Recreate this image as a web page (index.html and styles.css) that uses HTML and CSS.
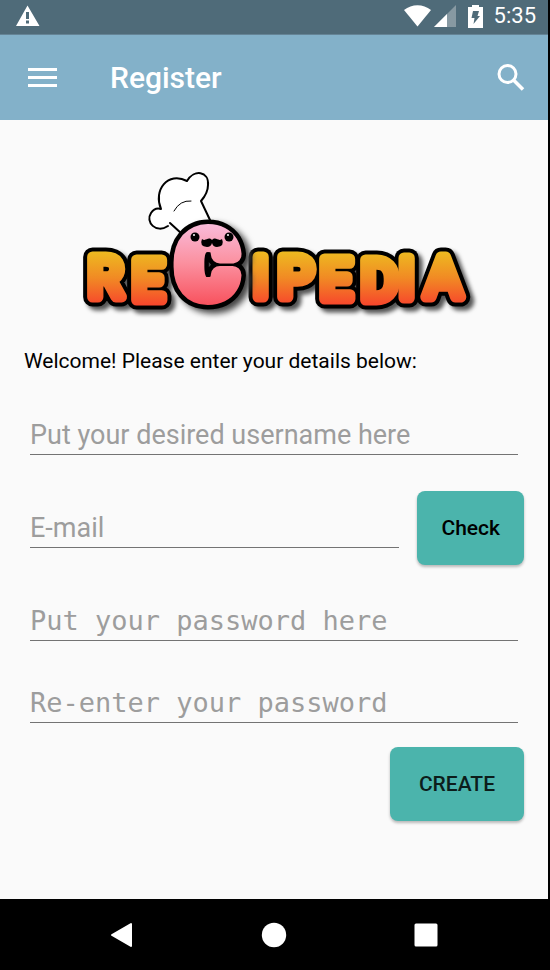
FILE: index.html
```html
<!DOCTYPE html>
<html lang="en">
<head>
<meta charset="utf-8">
<meta name="viewport" content="width=device-width, initial-scale=1">
<title>Register</title>
<link rel="stylesheet" href="styles.css">
</head>
<body>
<div class="status">
  <svg class="status-alert" width="24" height="22" viewBox="0 0 24 22" aria-hidden="true"><path fill="#fff" fill-rule="evenodd" d="M11.500 .5L23.500 21H0zM10 7v7h3V7zM10 15.500v3h3v-3z"/></svg>
  <svg width="27" height="22" viewBox="0 0 27 22" aria-hidden="true"><path fill="#fff" d="M0 5C8-1.500 19-1.500 27 5L13.500 21.500z"/></svg>
  <svg class="status-signal" width="22" height="22" viewBox="0 0 22 22" aria-hidden="true"><path fill="#8799a2" d="M22 0v22H0z"/><path fill="#fff" d="M13 9v13H0z"/></svg>
  <svg class="status-battery" width="15" height="23" viewBox="0 0 15 23" aria-hidden="true"><path fill="#fff" d="M4 0h7v2h4v21H0V2h4z"/><path fill="#4f6b79" d="M5 6h6l-1.500 5H12L5.500 19l1-6H3.500z"/></svg>
  <span class="clock">5:35</span>
</div>
<header class="appbar">
  <button class="icon-button" type="button" aria-label="Menu"><svg width="29" height="20" viewBox="0 0 29 20"><path fill="#fff" d="M0 0h29v3H0zM0 8h29v3H0zM0 16h29v3H0z"/></svg></button>
  <h1>Register</h1>
  <button class="icon-button" type="button" aria-label="Search"><svg width="27" height="28" viewBox="0 0 27 28"><circle cx="10.500" cy="10" r="8.500" fill="none" stroke="#fff" stroke-width="3"/><path d="M16.500 16l9.500 9.500" fill="none" stroke="#fff" stroke-width="3.500"/></svg></button>
</header>
<main>
  <svg class="logo" viewBox="74 165 400 160" role="img" aria-label="Recipedia">
    <defs>
      <linearGradient id="orange" gradientUnits="userSpaceOnUse" x1="0" y1="250" x2="0" y2="306"><stop offset="0" stop-color="#edbd20"/><stop offset=".5" stop-color="#f18a24"/><stop offset="1" stop-color="#f7442c"/></linearGradient>
      <linearGradient id="pink" gradientUnits="userSpaceOnUse" x1="0" y1="220" x2="0" y2="306"><stop offset="0" stop-color="#f9bfe0"/><stop offset=".5" stop-color="#fb909f"/><stop offset="1" stop-color="#f8505c"/></linearGradient>
      <text id="word" class="word" x="88 132 253 278 320 361 399 425" y="297 300 297 297 299 300 298 297">REIPEDIA</text>
      <text id="big" class="big" x="179" y="295">C</text>
    </defs>
    <use href="#word" class="word-outline"/>
    <use href="#word" class="word-fill"/>
    <g fill="#fff" stroke="#000" stroke-linejoin="round" stroke-linecap="round">
      <path stroke="none" d="M182 234L170 222C159 234 145 223 150 213Q153 207 161 209C153 193 167 174 187 181C194 170 209 171 208 185Q208 193 201 201L210 220z"/>
      <path fill="none" stroke-width="2" d="M182 234L170 223M168 226C156 234 145 222 151 213Q155 207 161 209M161 209C153 190 168 171 187 181C194 169 209 171 208 185Q208 193 201 201L210 220"/>
      <path fill="none" stroke-width="1" d="M174 211Q180 200 191 201"/>
    </g>
    <use href="#big" class="big-outline"/>
    <use href="#big" class="big-fill"/>
    <circle cx="195" cy="237" r="4.500"/><circle cx="229" cy="237" r="4.500"/>
    <g fill="#fff"><circle cx="194" cy="235" r="1"/><circle cx="228" cy="235" r="1"/></g>
    <path d="M212 240C208 236 206 242 202 239Q199 246 207 247Q211 247 212 243Q213 247 217 247Q225 246 222 239C218 242 216 236 212 240z"/>
  </svg>
  <p class="welcome">Welcome! Please enter your details below:</p>
  <form>
    <div class="fields">
      <input class="field" type="text" placeholder="Put your desired username here" aria-label="Username">
      <div class="email-row">
        <input class="field" type="email" placeholder="E-mail" aria-label="E-mail">
        <button class="button check" type="button">Check</button>
      </div>
      <input class="field mono" type="password" placeholder="Put your password here" aria-label="Password">
      <input class="field mono" type="password" placeholder="Re-enter your password" aria-label="Repeat password">
    </div>
    <button class="button create" type="submit">CREATE</button>
  </form>
</main>
<nav aria-label="System">
  <button type="button" aria-label="Back"><svg width="24" height="26" viewBox="0 0 24 26"><path fill="#fff" stroke="#fff" stroke-width="2" stroke-linejoin="round" d="M2 13L21 2v22z"/></svg></button>
  <button type="button" aria-label="Home"><svg width="24" height="26" viewBox="0 0 24 26"><circle cx="12" cy="13" r="12.200" fill="#fff"/></svg></button>
  <button type="button" aria-label="Recents"><svg width="24" height="26" viewBox="0 0 24 26"><rect x=".5" y="1.500" width="23" height="23" rx="1.500" fill="#fff"/></svg></button>
</nav>
</body>
</html>
```
FILE: styles.css
```css
* { box-sizing: border-box; }
body {
  margin: 0;
  min-height: 100vh;
  display: flex;
  flex-direction: column;
  background: #fafafa;
  border-right: 2px solid #000;
  font-family: Roboto, sans-serif;
  color: #000;
}
button { border: 0; padding: 0; background: none; font: inherit; color: inherit; }
svg { display: block; overflow: visible; }

.status {
  height: 35px;
  padding: 0 12px 2px 16px;
  display: flex;
  align-items: center;
  background: #4f6b79;
  border-bottom: 1px solid #658496;
  color: #fff;
}
.status-alert { margin-right: auto; }
.status-signal { margin-left: 3px; }
.status-battery { margin: 0 11px 0 12px; }
.clock { font-size: 22px; line-height: 32px; }

.appbar {
  height: 85px;
  padding: 0 24px 0 28px;
  display: flex;
  align-items: center;
  background: #83b1c9;
  color: #fff;
}
.appbar h1 {
  flex: 1;
  margin: 0 0 0 53px;
  font-size: 30px;
  line-height: 40px;
  font-weight: 500;
}

main { flex: 1; padding: 45px 24px 0; }
.logo { width: 80%; min-width: 240px; max-width: 400px; margin: 0 auto; }
.word { font: 400 56px Roboto, sans-serif; }
.big { font: 700 86px Roboto, sans-serif; }
.word-outline, .word-fill, .big-outline, .big-fill { stroke-linejoin: round; }
.word-outline { stroke: #000; stroke-width: 19px; filter: drop-shadow(4px 4px 2px #555); }
.word-fill { fill: url(#orange); stroke: url(#orange); stroke-width: 11px; }
.big-outline { stroke: #000; stroke-width: 27px; filter: drop-shadow(5px 4px 3px #444); }
.big-fill { fill: url(#pink); stroke: url(#pink); stroke-width: 18px; }

.welcome { margin: 21px 0 33px; font-size: 21px; line-height: 30px; }
.fields { display: grid; gap: 30px; }
.field {
  display: block;
  min-width: 0;
  height: 46px;
  margin: 0 6px 6px;
  padding: 6px 0 0;
  border: 0;
  border-bottom: 1px solid #737373;
  border-radius: 0;
  background: none;
  font: 27px Roboto, sans-serif;
  color: #000;
}
.field::placeholder { color: #9d9d9d; opacity: 1; }
.mono { font: 27px "DejaVu Sans Mono", monospace; }
.email-row { display: flex; align-items: center; gap: 12px; }
.email-row .field { flex: 1; }
.button {
  height: 74px;
  border-radius: 8px;
  background: #4bb4ac;
  box-shadow: 0 2px 3px #0004;
  font-size: 21px;
  font-weight: 500;
}
.check { padding: 0 24px; }
.create { display: block; margin: 18px 0 24px auto; padding: 0 29px; color: #0c1d1b; }

nav {
  height: 71px;
  padding: 0 110px;
  display: flex;
  align-items: center;
  justify-content: space-between;
  background: #000;
}
```
